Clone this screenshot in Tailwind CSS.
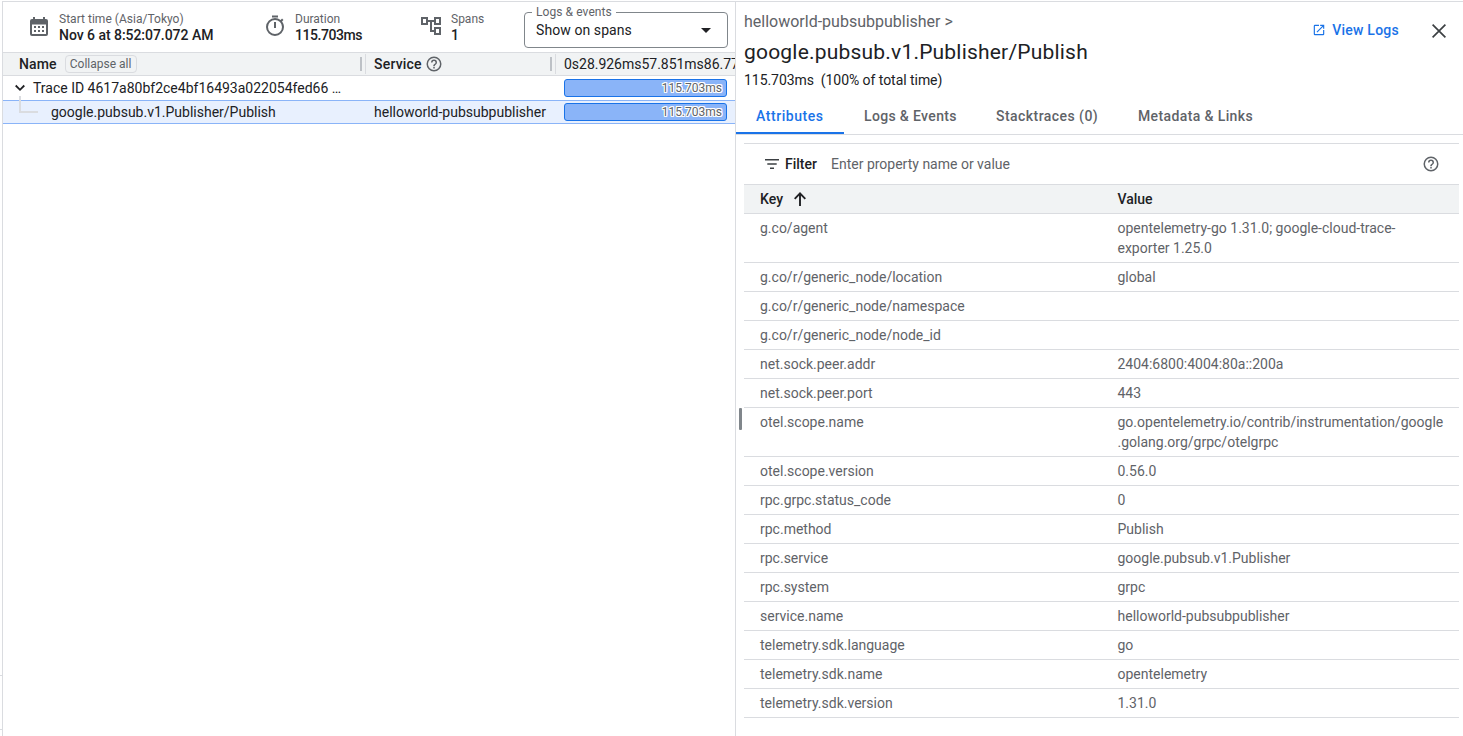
<!DOCTYPE html>
<html lang="en">
<head>
<meta charset="utf-8">
<title>Trace details</title>
<script src="https://cdn.jsdelivr.net/npm/@tailwindcss/browser@4"></script>
</head>
<body class="bg-white font-['Roboto',sans-serif] text-[14px] leading-5 text-[#202124]">
<div class="flex h-[736px] w-[1463px] overflow-hidden pt-px">
  <div class="flex w-[2px] flex-none flex-col pt-[674px]">
    <div class="h-px bg-[#dadce0]"></div>
    <div class="mt-[53px] h-px bg-[#dadce0]"></div>
  </div>
  <main class="flex w-[734px] flex-none flex-col overflow-hidden border-x border-t border-[#dadce0]">
    <header class="flex h-[50px] flex-none">
      <div class="flex w-[236px] pl-[24px] pt-[12px]">
        <svg class="h-6 w-6 flex-none" viewBox="0 0 24 24" fill="#5f6368"><path fill-rule="evenodd" d="M6 3h2v2h8V3h2v2h1a2 2 0 0 1 2 2v13a2 2 0 0 1-2 2H5a2 2 0 0 1-2-2V7a2 2 0 0 1 2-2h1zM5 10.500v9.500h14v-9.500zM7 12h2v2H7zm4 0h2v2h-2zm4 0h2v2h-2zM7 16h2v2H7zm4 0h2v2h-2zm4 0h2v2h-2z"/></svg>
        <div class="ml-[8px] -mt-[3px] whitespace-nowrap"><div class="text-[12px] leading-[17px] tracking-[0.02px] text-[#5f6368]">Start time (Asia/Tokyo)</div><div class="-mt-px font-medium leading-4 tracking-[-0.04px]">Nov 6 at 8:52:07.072 AM</div></div>
      </div>
      <div class="flex w-[156px] pl-[24px] pt-[12px]">
        <svg class="h-6 w-6 flex-none" viewBox="0 0 24 24" fill="#5f6368"><path d="M15 1.500H9v2h6zM11 14h2V8h-2zm8.030-6.610l1.420-1.420c-.43-.51-.9-.99-1.410-1.410l-1.420 1.420A8.960 8.960 0 0 0 12 4a9 9 0 1 0 9 9c0-2.120-.74-4.070-1.970-5.610zM12 20a7 7 0 1 1 0-14 7 7 0 0 1 0 14z"/></svg>
        <div class="ml-[8px] -mt-[3px] whitespace-nowrap"><div class="text-[12px] leading-[17px] text-[#5f6368]">Duration</div><div class="-mt-px font-medium leading-4 tracking-[-0.45px]">115.703ms</div></div>
      </div>
      <div class="flex w-[129px] pl-[24px] pt-[12px]">
        <svg class="h-6 w-6 flex-none" viewBox="0 0 24 24" fill="#5f6368"><path d="M22 11V3h-7v3H9V3H2v8h7V8h2v10h4v3h7v-8h-7v3h-2V8h2v3zM7 9H4V5h3zm10 6h3v4h-3zm0-10h3v4h-3z"/></svg>
        <div class="ml-[8px] -mt-[3px] whitespace-nowrap"><div class="text-[12px] leading-[17px] text-[#5f6368]">Spans</div><div class="-mt-px font-medium leading-4">1</div></div>
      </div>
      <div class="relative mt-[10px] flex h-[36px] w-[204px] items-center rounded border border-[#80868b] pl-[11px] pr-[16px]">
        <span class="absolute -top-[9px] left-[7px] bg-white px-1 text-[12px] leading-4 tracking-[0.08px] text-[#5f6368]">Logs &amp; events</span>
        <span class="tracking-[0.08px]">Show on spans</span>
        <svg class="ml-auto h-[5px] w-[10px]" viewBox="0 0 10 5" fill="#202124"><path d="M0 0h10L5 5z"/></svg>
      </div>
    </header>
    <div class="flex h-[24px] flex-none items-center border-y border-[#dadce0] bg-[#f1f3f4] whitespace-nowrap">
      <div class="flex h-full w-[357px] flex-none items-center pl-[16px] font-medium"><span class="tracking-[0.1px]">Name</span>
        <span class="ml-[8px] flex h-[18px] w-[72px] items-center justify-center rounded border border-[#dadce0] text-[12px] font-normal text-[#5f6368]">Collapse all</span>
      </div>
      <div class="h-[14px] w-[2px] flex-none bg-[#bdc1c6]"></div><div class="ml-[3px] h-[20px] w-px flex-none bg-[#dadce0]"></div>
      <div class="flex w-[184px] flex-none items-center pl-[8px] font-medium"><span class="tracking-[0.2px]">Service</span>
        <svg class="ml-[3px] h-[18px] w-[18px]" viewBox="0 0 24 24" fill="#5f6368"><path d="M11 18h2v-2h-2zm1-16a10 10 0 1 0 0 20 10 10 0 0 0 0-20zm0 18a8 8 0 1 1 0-16 8 8 0 0 1 0 16zm0-14a4 4 0 0 0-4 4h2c0-1.100.9-2 2-2s2 .9 2 2c0 2-3 1.750-3 5h2c0-2.250 3-2.500 3-5a4 4 0 0 0-4-4z"/></svg>
      </div>
      <div class="h-[14px] w-[2px] flex-none bg-[#bdc1c6]"></div><div class="ml-[3px] h-[20px] w-px flex-none bg-[#dadce0]"></div>
      <div class="w-[180px] flex-none overflow-hidden pl-[8px] tracking-[-0.02px]">0s28.926ms57.851ms86.777ms</div>
    </div>
    <div class="flex h-[24px] flex-none items-center whitespace-nowrap">
      <svg class="ml-[12px] h-[10px] w-[10px] flex-none" viewBox="0 0 10 10" fill="none" stroke="#202124" stroke-width="1.800"><path d="M.7 2.500L5 6.800l4.300-4.300"/></svg>
      <div class="w-[539px] flex-none pl-[8px]">Trace ID 4617a80bf2ce4bf16493a022054fed66 …</div>
      <div class="flex h-[18px] w-[163px] flex-none items-center justify-end rounded-[3px] border border-[#1a73e8] bg-[#8ab4f8] pr-[4px] text-[12px] text-[#5f6368] [text-shadow:1px_0_#fff,-1px_0_#fff,0_1px_#fff,0_-1px_#fff,1px_1px_#fff,-1px_-1px_#fff,1px_-1px_#fff,-1px_1px_#fff]">115.703ms</div>
    </div>
    <div class="flex h-[24px] flex-none items-center border-y border-[#8ab4f8] bg-[#e8f0fe] whitespace-nowrap">
      <div class="flex h-full w-[371px] pl-[16px]"><div class="-mt-[5px] h-[17px] w-[19px] flex-none border-b-2 border-l-2 border-[#dadce0]"></div><span class="ml-[13px] mt-px">google.pubsub.v1.Publisher/Publish</span></div>
      <div class="w-[190px]">helloworld-pubsubpublisher</div>
      <div class="flex h-[18px] w-[163px] flex-none items-center justify-end rounded-[3px] border border-[#1a73e8] bg-[#8ab4f8] pr-[4px] text-[12px] text-[#5f6368] [text-shadow:1px_0_#fff,-1px_0_#fff,0_1px_#fff,0_-1px_#fff,1px_1px_#fff,-1px_-1px_#fff,1px_-1px_#fff,-1px_1px_#fff]">115.703ms</div>
    </div>
  </main>
  <aside class="relative flex flex-1 flex-col border-t border-[#dadce0] pr-[4px]">
    <div class="absolute left-[3px] top-[406px] h-[22px] w-[3px] rounded-[1px] bg-[#80868b]"></div>
    <div class="flex h-[96px] flex-none justify-between pl-[8px] whitespace-nowrap">
      <div>
        <div class="mt-[10px] text-[16px] text-[#5f6368]">helloworld-pubsubpublisher &gt;</div>
        <div class="mt-[8px] text-[21px] leading-6 tracking-[0.2px]">google.pubsub.v1.Publisher/Publish</div>
        <div class="mt-[6px] tracking-[-0.05px]">115.703ms&nbsp; (100% of total time)</div>
      </div>
      <div class="mt-[18px] flex h-[20px] items-center pr-[13px]">
        <svg class="h-[14px] w-[14px]" viewBox="0 0 24 24" fill="#1a73e8"><path d="M19 19H5V5h7V3H5a2 2 0 0 0-2 2v14a2 2 0 0 0 2 2h14a2 2 0 0 0 2-2v-7h-2zM14 3v2h3.590l-9.830 9.830 1.410 1.410L19 6.410V10h2V3z"/></svg>
        <span class="ml-[6px] font-medium tracking-[0.25px] text-[#1a73e8]">View Logs</span>
        <svg class="ml-[33px] mt-[2px] h-[14px] w-[14px]" viewBox="0 0 14 14" fill="none" stroke="#3c4043" stroke-width="1.700"><path d="M.6.6l12.800 12.800M13.400.6L.6 13.400"/></svg>
      </div>
    </div>
    <nav class="-mr-[4px] flex h-[37px] flex-none border-b border-[#dadce0] font-medium text-[#5f6368] whitespace-nowrap">
      <div class="h-[36px] w-[108px] border-b-2 border-[#1a73e8] pl-[20px] pt-[8px] tracking-[0.55px] text-[#1a73e8]">Attributes</div>
      <div class="w-[132px] pl-[20px] pt-[8px] tracking-[0.35px]">Logs &amp; Events</div>
      <div class="w-[142px] pl-[20px] pt-[8px] tracking-[0.45px]">Stacktraces (0)</div>
      <div class="pl-[20px] pt-[8px] tracking-[0.38px]">Metadata &amp; Links</div>
    </nav>
    <section class="ml-[8px] mt-[8px] whitespace-nowrap">
      <div class="flex h-[41px] items-center border-t border-[#dadce0] pl-[21px] pr-[19px]">
        <svg class="h-[10px] w-[14px]" viewBox="0 0 14 10" fill="#3c4043"><path d="M0 0h14v1.600H0zM2.300 4.200h9.400v1.600H2.300zM5 8.400h4V10H5z"/></svg>
        <span class="ml-[6px] font-medium">Filter</span>
        <span class="ml-[14px] text-[#5f6368]">Enter property name or value</span>
        <svg class="ml-auto h-[18px] w-[18px]" viewBox="0 0 24 24" fill="#5f6368"><path d="M11 18h2v-2h-2zm1-16a10 10 0 1 0 0 20 10 10 0 0 0 0-20zm0 18a8 8 0 1 1 0-16 8 8 0 0 1 0 16zm0-14a4 4 0 0 0-4 4h2c0-1.100.9-2 2-2s2 .9 2 2c0 2-3 1.750-3 5h2c0-2.250 3-2.500 3-5a4 4 0 0 0-4-4z"/></svg>
      </div>
      <div class="flex h-[30px] items-center border-y border-[#dadce0] bg-[#f1f3f4] font-medium">
        <div class="flex w-[373.5px] items-center pl-[16px]"><span class="tracking-[0.1px]">Key</span>
          <svg class="ml-[10.5px] h-[14px] w-[12px]" viewBox="0 0 12 14" fill="none" stroke="#202124" stroke-width="1.900"><path d="M6 14V1.500M.7 6.800L6 1.400l5.300 5.400"/></svg>
        </div>
        <span>Value</span>
      </div>
      <div class="text-[#5f6368] [&>div]:flex [&>div]:border-b [&>div]:border-[#dadce0] [&>div]:py-1 [&>div>div:first-child]:w-[373.5px] [&>div>div:first-child]:pl-[16px]">
        <div><div>g.co/agent</div><div>opentelemetry-go 1.31.0; google-cloud-trace-<br>exporter 1.25.0</div></div>
        <div><div>g.co/r/generic_node/location</div><div>global</div></div>
        <div><div>g.co/r/generic_node/namespace</div><div>&nbsp;</div></div>
        <div><div>g.co/r/generic_node/node_id</div><div>&nbsp;</div></div>
        <div><div>net.sock.peer.addr</div><div>2404:6800:4004:80a::200a</div></div>
        <div><div>net.sock.peer.port</div><div>443</div></div>
        <div><div>otel.scope.name</div><div>go.opentelemetry.io/contrib/instrumentation/google<br>.golang.org/grpc/otelgrpc</div></div>
        <div><div>otel.scope.version</div><div>0.56.0</div></div>
        <div><div>rpc.grpc.status_code</div><div>0</div></div>
        <div><div>rpc.method</div><div>Publish</div></div>
        <div><div>rpc.service</div><div>google.pubsub.v1.Publisher</div></div>
        <div><div>rpc.system</div><div>grpc</div></div>
        <div><div>service.name</div><div>helloworld-pubsubpublisher</div></div>
        <div><div>telemetry.sdk.language</div><div>go</div></div>
        <div><div>telemetry.sdk.name</div><div>opentelemetry</div></div>
        <div><div>telemetry.sdk.version</div><div>1.31.0</div></div>
      </div>
    </section>
  </aside>
</div>
</body>
</html>
